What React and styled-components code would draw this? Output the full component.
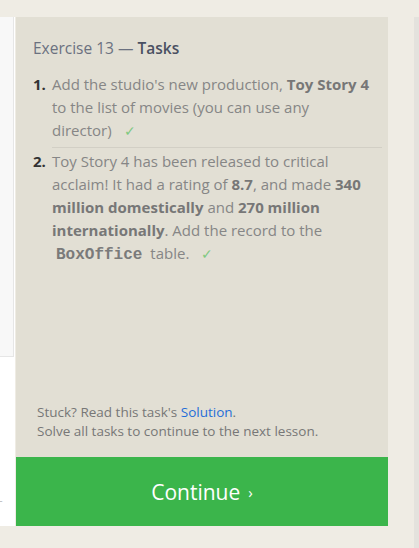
import React from "react";
import styled, { createGlobalStyle } from "styled-components";

const GlobalStyle = createGlobalStyle`
  html, body {
    margin: 0;
    padding: 0;
    background: #efece4;
    font-family: "Open Sans", "Noto Sans", sans-serif;
  }
`;

const Page = styled.div`
  display: flex;
  align-items: flex-start;
  width: 419px;
  height: 548px;
  padding-top: 17px;
  box-sizing: border-box;
  overflow: hidden;
`;

const SidePanel = styled.div`
  display: flex;
  flex-direction: column;
  width: 15px;
  height: 509px;
  background: #fff;
  position: relative;
  overflow: hidden;
`;

const SideTop = styled.div`
  height: 339px;
  width: 13px;
  background: #f8f8f8;
  border-right: 1px solid #e6e6e6;
  border-bottom: 1px solid #e6e6e6;
`;

const SideGlyph = styled.span`
  position: absolute;
  left: -6px;
  top: 478px;
  font-size: 15px;
  color: #c4c4c4;
`;

const Column = styled.div`
  display: flex;
  flex-direction: column;
  width: 372px;
  height: 509px;
  margin-left: 1px;
`;

const Tasks = styled.div`
  flex: 1;
  display: flex;
  flex-direction: column;
  background: #e2dfd4;
  padding: 20px 6px 0 17px;
`;

const Heading = styled.h3`
  margin: 0 0 10px;
  font-size: 15.5px;
  font-weight: 400;
  color: #6b7180;

  strong {
    font-weight: 600;
    color: #4a5062;
  }
`;

const List = styled.ol`
  margin: 0;
  padding: 0;
  list-style: none;
`;

const Item = styled.li`
  display: flex;
  gap: 5px;
  padding: 4px 0 5px;
  font-size: 15px;
  line-height: 23px;
  color: #868686;

  & + & {
    border-top: 1px solid #d2cfc5;
    margin-left: 19px;
    padding-top: 2px;
  }

  & + & > span:first-child {
    margin-left: -19px;
  }

  b {
    color: #777;
    font-weight: 700;
  }
`;

const Num = styled.span`
  flex: none;
  width: 14px;
  font-weight: 700;
  color: #333;
`;

const Body = styled.span`
  flex: 1;
`;

const Code = styled.code`
  font-family: "Liberation Mono", monospace;
  font-weight: 700;
  font-size: 16px;
  color: #7a7a7a;
  padding: 0 4px;
`;

const Check = styled.span`
  color: #7fc981;
  margin-left: 12px;
  font-size: 14px;
`;

const Footer = styled.div`
  margin-top: auto;
  padding: 0 0 16px 4px;
  font-size: 13.5px;
  line-height: 19px;
  color: #777;

  a {
    color: #1f6ed8;
    text-decoration: none;
  }
`;

const ContinueButton = styled.button`
  display: flex;
  align-items: center;
  justify-content: center;
  gap: 8px;
  height: 69px;
  border: none;
  background: #3bb54b;
  color: #fff;
  font-family: inherit;
  font-size: 21px;
  cursor: pointer;

  span {
    font-size: 15px;
  }
`;

const Scroll = styled.div`
  margin-left: auto;
  width: 5px;
  height: 100%;
  background: #e4e2dd;
`;

export default function App() {
  return (
    <>
      <GlobalStyle />
      <Page>
        <SidePanel>
          <SideTop />
          <SideGlyph>T</SideGlyph>
        </SidePanel>
        <Column>
          <Tasks>
            <Heading>
              Exercise 13 — <strong>Tasks</strong>
            </Heading>
            <List>
              <Item>
                <Num>1.</Num>
                <Body>
                  Add the studio's new production, <b>Toy Story 4</b> to the
                  list of movies (you can use any director)
                  <Check>✓</Check>
                </Body>
              </Item>
              <Item>
                <Num>2.</Num>
                <Body>
                  Toy Story 4 has been released to critical acclaim! It had a
                  rating of <b>8.7</b>, and made <b>340 million domestically</b>{" "}
                  and <b>270 million internationally</b>. Add the record to the{" "}
                  <Code>BoxOffice</Code> table.
                  <Check>✓</Check>
                </Body>
              </Item>
            </List>
            <Footer>
              Stuck? Read this task's <a href="#">Solution</a>.
              <br />
              Solve all tasks to continue to the next lesson.
            </Footer>
          </Tasks>
          <ContinueButton>
            Continue <span>›</span>
          </ContinueButton>
        </Column>
        <Scroll />
      </Page>
    </>
  );
}
